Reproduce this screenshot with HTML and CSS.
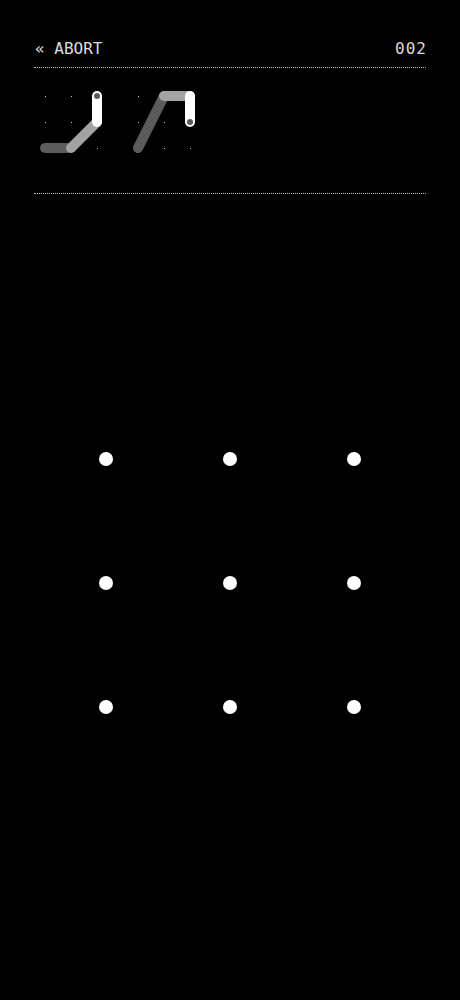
FILE: index.html
```html
<!DOCTYPE html>
<html>
<head>
<meta charset="utf-8">
<link rel="stylesheet" href="styles.css">
</head>
<body>
<div class="page">
  <header class="top">
    <span class="abort">« ABORT</span>
    <span class="count">002</span>
  </header>
  <div class="rule"></div>
  <div class="history">
    <svg class="mini" width="64" height="64" viewBox="0 0 64 64">
      <g fill="#c8c8c8" shape-rendering="crispEdges">
        <rect x="6" y="6" width="1" height="1"/><rect x="32" y="6" width="1" height="1"/><rect x="58" y="6" width="1" height="1"/>
        <rect x="6" y="32" width="1" height="1"/><rect x="32" y="32" width="1" height="1"/><rect x="58" y="32" width="1" height="1"/>
        <rect x="6" y="58" width="1" height="1"/><rect x="32" y="58" width="1" height="1"/><rect x="58" y="58" width="1" height="1"/>
      </g>
      <g stroke-width="10" stroke-linecap="round" fill="none">
        <line x1="6" y1="58" x2="32" y2="58" stroke="#5c5c5c"/>
        <line x1="32" y1="58" x2="58" y2="32" stroke="#a3a3a3"/>
        <line x1="58" y1="32" x2="58" y2="6" stroke="#ffffff"/>
      </g>
      <circle cx="58" cy="6" r="3" fill="#5a5a5a"/>
    </svg>
    <svg class="mini" width="64" height="64" viewBox="0 0 64 64">
      <g fill="#c8c8c8" shape-rendering="crispEdges">
        <rect x="6" y="6" width="1" height="1"/><rect x="32" y="6" width="1" height="1"/><rect x="58" y="6" width="1" height="1"/>
        <rect x="6" y="32" width="1" height="1"/><rect x="32" y="32" width="1" height="1"/><rect x="58" y="32" width="1" height="1"/>
        <rect x="6" y="58" width="1" height="1"/><rect x="32" y="58" width="1" height="1"/><rect x="58" y="58" width="1" height="1"/>
      </g>
      <g stroke-width="10" stroke-linecap="round" fill="none">
        <line x1="6" y1="58" x2="32" y2="6" stroke="#5c5c5c"/>
        <line x1="32" y1="6" x2="58" y2="6" stroke="#a3a3a3"/>
        <line x1="58" y1="6" x2="58" y2="32" stroke="#ffffff"/>
      </g>
      <circle cx="58" cy="32" r="3" fill="#5a5a5a"/>
    </svg>
  </div>
  <div class="rule rule-bottom"></div>
  <div class="pad">
    <span class="dot"></span><span class="dot"></span><span class="dot"></span>
    <span class="dot"></span><span class="dot"></span><span class="dot"></span>
    <span class="dot"></span><span class="dot"></span><span class="dot"></span>
  </div>
</div>
</body>
</html>
```
FILE: styles.css
```css
html, body {
  margin: 0;
  padding: 0;
  background: #000;
}
.page {
  width: 460px;
  height: 1000px;
  padding: 39px 34px 0 34px;
  box-sizing: border-box;
  font-family: "DejaVu Sans Mono", "Liberation Mono", monospace;
  color: #dcdcdc;
}
.top {
  display: flex;
  justify-content: space-between;
  font-size: 16px;
  line-height: 20px;
  height: 20px;
}
.abort {
  padding-left: 1px;
}
.count {
  letter-spacing: 1px;
  margin-right: -1px;
}
.rule {
  margin-top: 8px;
  border-top: 1px dotted #c4c4c4;
}
.history {
  display: flex;
  gap: 29px;
  padding: 22px 0 0 5px;
  height: 64px;
}
.mini {
  display: block;
}
.rule-bottom {
  margin-top: 39px;
}
.pad {
  display: grid;
  grid-template-columns: repeat(3, 124px);
  grid-auto-rows: 124px;
  justify-content: center;
  margin: 203px -34px 0 -34px;
}
.dot {
  justify-self: center;
  align-self: center;
  width: 14px;
  height: 14px;
  border-radius: 50%;
  background: #fff;
}
```
